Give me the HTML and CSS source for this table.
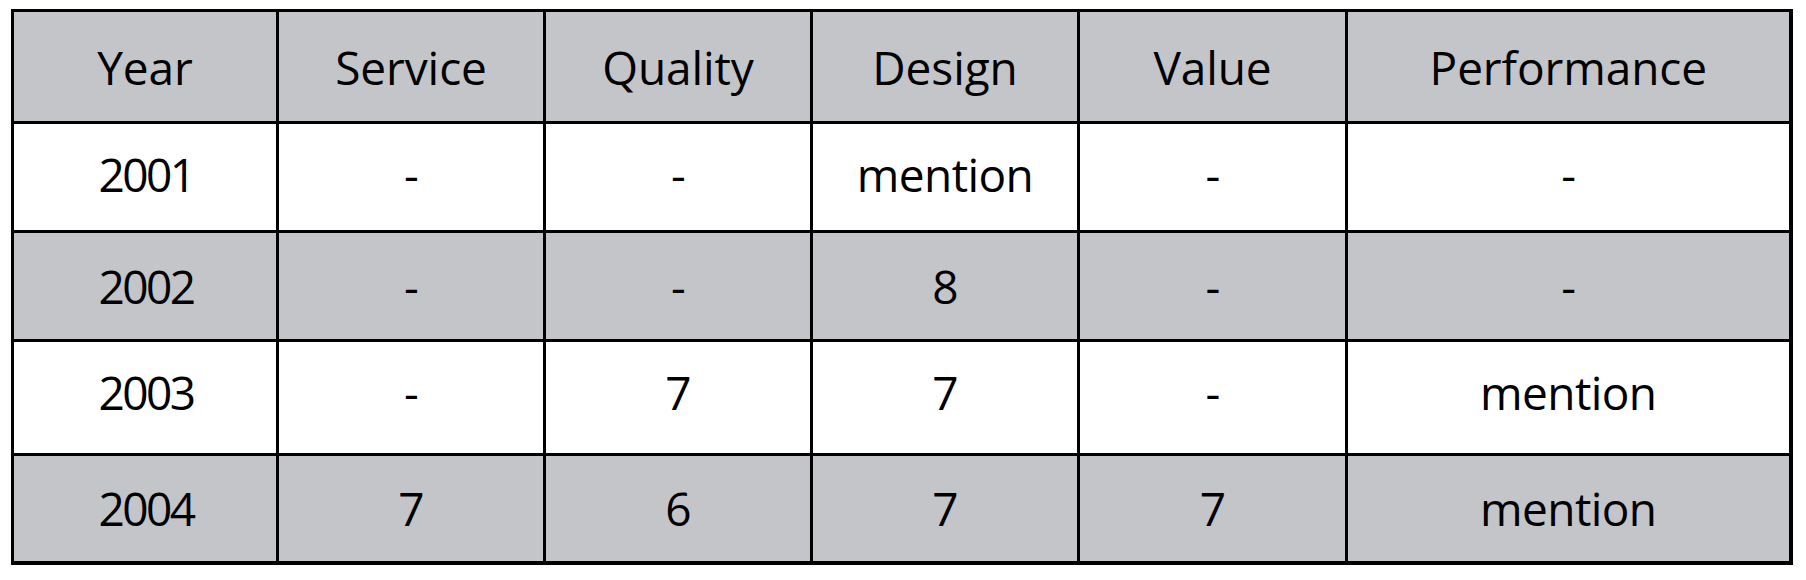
FILE: index.html
```html
<!DOCTYPE html>
<html lang="en">
<head>
<meta charset="utf-8">
<title>Ratings</title>
<link rel="stylesheet" href="styles.css">
</head>
<body>
<table class="ratings">
  <colgroup>
    <col class="c1"><col class="c2"><col class="c3"><col class="c4"><col class="c5"><col class="c6">
  </colgroup>
  <thead>
    <tr class="head"><th>Year</th><th>Service</th><th>Quality</th><th>Design</th><th>Value</th><th>Performance</th></tr>
  </thead>
  <tbody>
    <tr class="r1 light"><td>2001</td><td>-</td><td>-</td><td>mention</td><td>-</td><td>-</td></tr>
    <tr class="r2 dark"><td>2002</td><td>-</td><td>-</td><td>8</td><td>-</td><td>-</td></tr>
    <tr class="r3 light"><td>2003</td><td>-</td><td>7</td><td>7</td><td>-</td><td>mention</td></tr>
    <tr class="r4 dark"><td>2004</td><td>7</td><td>6</td><td>7</td><td>7</td><td>mention</td></tr>
  </tbody>
</table>
</body>
</html>
```
FILE: styles.css
```css
html, body {
  margin: 0;
  padding: 0;
  background: #ffffff;
}
body {
  padding: 9px 0 0 11px;
}
.ratings {
  border-collapse: collapse;
  table-layout: fixed;
  width: 1781px;
  font-family: "Open Sans", "Liberation Sans", sans-serif;
  font-size: 46px;
  color: #000;
  letter-spacing: -0.6px;
}
.ratings th,
.ratings td {
  border: 3px solid #000;
  text-align: center;
  vertical-align: middle;
  font-weight: 400;
  padding: 0;
  line-height: 1;
}
.ratings th {
  letter-spacing: -0.1px;
}
.ratings td:first-child {
  letter-spacing: -2.5px;
  text-indent: 2px;
}
.c1 { width: 265px; }
.c2 { width: 267px; }
.c3 { width: 267px; }
.c4 { width: 267px; }
.c5 { width: 268px; }
.c6 { width: 444px; }
.head { background: #c4c5c9; height: 112px; }
.dark { background: #c4c5c9; }
.light { background: #ffffff; }
.r1 { height: 109px; }
.r2 { height: 109px; }
.r3 { height: 114px; }
.r4 { height: 108px; }
.r1 td { padding-bottom: 6px; }
.r3 td { padding-bottom: 11px; }
.ratings tr:last-child td { border-bottom-width: 4px; }
.ratings td:last-child,
.ratings th:last-child { border-right-width: 4px; }
```
